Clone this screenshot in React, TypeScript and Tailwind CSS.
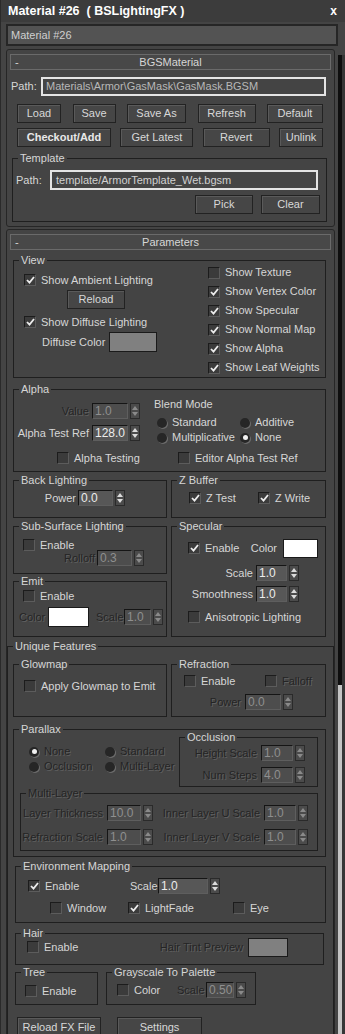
import React from 'react';

const dim = "text-[#242424] [text-shadow:1px_1px_0_#606060]";

function Box({ on }: { on?: boolean }) {
  return (
    <span className="flex h-[12px] w-[12px] shrink-0 items-center justify-center border border-[#1c1c1c] border-b-[#5c5c5c] border-r-[#5c5c5c] bg-[#3b3b3b]">
      {on && (
        <svg width="9" height="8" viewBox="0 0 9 8">
          <path d="M1 4l2.5 2.6L8 1" stroke="#ececec" strokeWidth="1.8" fill="none" />
        </svg>
      )}
    </span>
  );
}

function Check({ label, on, off, className = "" }: { label: string; on?: boolean; off?: boolean; className?: string }) {
  return (
    <div className={`flex h-[14px] shrink-0 items-center gap-[5px] ${className}`}>
      <Box on={on} />
      <span className={`whitespace-nowrap ${off ? dim : ""}`}>{label}</span>
    </div>
  );
}

function Radio({ label, on, off, className = "" }: { label: string; on?: boolean; off?: boolean; className?: string }) {
  return (
    <div className={`flex h-[15px] items-center gap-[5px] ${className}`}>
      <span className="flex h-[10px] w-[10px] shrink-0 items-center justify-center rounded-full bg-[#262626] shadow-[1px_1px_0_#6c6c6c]">
        {on && <span className="h-[5px] w-[5px] rounded-full bg-[#f0f0f0]" />}
      </span>
      <span className={`whitespace-nowrap ${off ? dim : ""}`}>{label}</span>
    </div>
  );
}

function Spin({ v, w, off }: { v: string; w: string; off?: boolean }) {
  const tri = off ? "#8a8a8a" : "#dcdcdc";
  return (
    <div className="flex items-center gap-[2px]">
      <span
        className={`flex h-[16px] items-center overflow-hidden whitespace-nowrap border border-[#151515] border-b-[#5e5e5e] border-r-[#5e5e5e] pl-[2px] text-[12px] ${w} ${
          off ? "bg-[#4d4d4d] text-[#8f8f8f]" : "bg-[#575757] text-[#ececec]"
        }`}
      >
        {v}
      </span>
      <span className="flex h-[16px] w-[10px] flex-col items-center justify-center gap-[2px] border border-[#2a2a2a] bg-[#4b4b4b]">
        <svg width="6" height="4" viewBox="0 0 6 4">
          <path d="M0 4L3 0L6 4Z" fill={tri} />
        </svg>
        <svg width="6" height="4" viewBox="0 0 6 4">
          <path d="M0 0L6 0L3 4Z" fill={tri} />
        </svg>
      </span>
    </div>
  );
}

function Btn({ children, className = "" }: { children: React.ReactNode; className?: string }) {
  return (
    <div
      className={`flex h-[19px] shrink-0 items-center justify-center border border-[#222] bg-[#464646] text-[#d8d8d8] shadow-[inset_1px_1px_0_#5a5a5a] ${className}`}
    >
      {children}
    </div>
  );
}

function Group({ title, off, className = "", children }: { title: string; off?: boolean; className?: string; children?: React.ReactNode }) {
  return (
    <fieldset className={`shrink-0 border border-[#1f1f1f] ${className}`}>
      <legend className={`ml-[5px] px-[2px] leading-[13px] ${off ? dim : ""}`}>{title}</legend>
      {children}
    </fieldset>
  );
}

function Header({ title }: { title: string }) {
  return (
    <div className="mx-[3px] flex h-[16px] items-center border border-[#6a6a6a] bg-[#484848] px-[4px]">
      <span className="w-[20px]">-</span>
      <span className="flex-1 text-center">{title}</span>
      <span className="w-[20px]" />
    </div>
  );
}

function Swatch({ className = "" }: { className?: string }) {
  return <span className={`shrink-0 border border-[#1a1a1a] ${className}`} />;
}

export default function App() {
  return (
    <div className="flex h-[1034px] w-[345px] flex-col overflow-hidden border-l border-[#2a2a2a] bg-[#444] font-['Liberation_Sans',Arial,sans-serif] text-[11px] leading-[13px] text-[#d6d6d6]">
      {/* title bar */}
      <div className="flex h-[22px] shrink-0 items-center justify-between bg-[#3c3c3c] pl-[7px] pr-[8px]">
        <span className="whitespace-pre text-[12.5px] font-bold text-white">Material #26  ( BSLightingFX )</span>
        <span className="text-[12px] font-bold text-white">x</span>
      </div>

      {/* name field */}
      <div className="ml-[5px] mt-[2px] flex h-[22px] w-[332px] shrink-0 items-center border-2 border-[#262626] bg-[#535353] pl-[3px] text-[#cfcfcf]">
        Material #26
      </div>

      <div className="flex min-h-0 flex-1">
        <div className="w-[336px] shrink-0">
          {/* BGSMaterial rollout */}
          <div className="ml-[5px] mt-[3px] w-[329px] rounded-[3px] border border-[#262626] pb-[4px] pt-[4px]">
            <Header title="BGSMaterial" />
            <div className="mt-[7px] flex h-[19px] items-center pl-[4px]">
              <span className="w-[30px]">Path:</span>
              <span className="flex h-[19px] w-[285px] items-center border-2 border-[#e4e4e4] pl-[3px] text-[#b8b8b8]">
                Materials\Armor\GasMask\GasMask.BGSM
              </span>
            </div>
            <div className="mt-[8px] flex justify-between pl-[10px] pr-[11px]">
              <Btn className="w-[44px]">Load</Btn>
              <Btn className="w-[43px]">Save</Btn>
              <Btn className="w-[59px]">Save As</Btn>
              <Btn className="w-[58px]">Refresh</Btn>
              <Btn className="w-[56px]">Default</Btn>
            </div>
            <div className="mt-[5px] flex justify-between pl-[10px] pr-[11px]">
              <Btn className="w-[94px] font-bold text-[#e8e8e8]">Checkout/Add</Btn>
              <Btn className="w-[73px]">Get Latest</Btn>
              <Btn className="w-[67px]">Revert</Btn>
              <Btn className="w-[44px]">Unlink</Btn>
            </div>
            <Group title="Template" className="ml-[5px] mt-[5px] h-[70px] w-[315px]">
              <div className="mt-[5px] flex items-center pl-[3px]">
                <span className="w-[34px]">Path:</span>
                <span className="flex h-[20px] w-[268px] items-center border-2 border-[#e4e4e4] pl-[4px] text-[#d0d0d0]">
                  template/ArmorTemplate_Wet.bgsm
                </span>
              </div>
              <div className="mt-[5px] flex justify-end gap-[8px] pr-[6px]">
                <Btn className="w-[58px]">Pick</Btn>
                <Btn className="w-[59px]">Clear</Btn>
              </div>
            </Group>
          </div>

          {/* Parameters rollout */}
          <div className="ml-[5px] mt-[2px] w-[329px] rounded-[3px] border border-[#262626] pt-[4px]">
            <Header title="Parameters" />
            <div className="pl-[6px] pr-[8px]">
              {/* View */}
              <Group title="View" className="mt-[4px] h-[124px] w-[313px]">
                <div className="flex">
                  <div className="flex w-[194px] flex-col pl-[10px]">
                    <Check label="Show Ambient Lighting" on className="mt-[6px]" />
                    <Btn className="ml-[43px] mt-[3px] h-[18px] w-[58px]">Reload</Btn>
                    <Check label="Show Diffuse Lighting" on className="mt-[6px]" />
                    <div className="mt-[3px] flex items-center pl-[18px]">
                      <span className="w-[67px] whitespace-nowrap">Diffuse Color</span>
                      <Swatch className="h-[20px] w-[48px] bg-[#808080]" />
                    </div>
                  </div>
                  <div className="-mt-[4px] flex flex-col">
                    <Check label="Show Texture" className="h-[19px]" />
                    <Check label="Show Vertex Color" on className="h-[19px]" />
                    <Check label="Show Specular" on className="h-[19px]" />
                    <Check label="Show Normal Map" on className="h-[19px]" />
                    <Check label="Show Alpha" on className="h-[19px]" />
                    <Check label="Show Leaf Weights" on className="h-[19px]" />
                  </div>
                </div>
              </Group>

              {/* Alpha */}
              <Group title="Alpha" className="mt-[5px] h-[89px] w-[313px]">
                <div className="flex">
                  <div className="w-[127px]">
                    <div className="mt-[7px] flex items-center">
                      <span className={`w-[75px] text-right ${dim}`}>Value</span>
                      <span className="ml-[3px]">
                        <Spin v="1.0" w="w-[36px]" off />
                      </span>
                    </div>
                    <div className="mt-[6px] flex items-center">
                      <span className="w-[75px] whitespace-nowrap text-right">Alpha Test Ref</span>
                      <span className="ml-[3px]">
                        <Spin v="128.0" w="w-[36px]" />
                      </span>
                    </div>
                  </div>
                  <div className="ml-[13px] mt-[2px]">
                    <div className="h-[14px]">Blend Mode</div>
                    <div className="mt-[3px] grid grid-cols-[83px_auto] pl-[3px]">
                      <Radio label="Standard" />
                      <Radio label="Additive" />
                      <Radio label="Multiplicative" />
                      <Radio label="None" on />
                    </div>
                  </div>
                </div>
                <div className="mt-[6px] flex pl-[43px]">
                  <Check label="Alpha Testing" className="w-[121px]" />
                  <Check label="Editor Alpha Test Ref" />
                </div>
              </Group>

              {/* Back lighting / Z buffer */}
              <div className="mt-[2px] flex gap-[4px]">
                <Group title="Back Lighting" className="h-[44px] w-[154px]">
                  <div className="mt-[3px] flex items-center">
                    <span className="w-[62px] text-right">Power</span>
                    <span className="ml-[2px]">
                      <Spin v="0.0" w="w-[35px]" />
                    </span>
                  </div>
                </Group>
                <Group title="Z Buffer" className="h-[44px] w-[155px]">
                  <div className="mt-[4px] flex pl-[17px]">
                    <Check label="Z Test" on className="w-[69px]" />
                    <Check label="Z Write" on />
                  </div>
                </Group>
              </div>

              {/* Sub-surface / Emit / Specular */}
              <div className="mt-[2px] flex gap-[4px]">
                <div className="flex w-[154px] flex-col">
                  <Group title="Sub-Surface Lighting" className="h-[54px] w-[154px]">
                    <Check label="Enable" className="mt-[5px] pl-[9px]" />
                    <div className="-mt-[2px] flex items-center">
                      <span className={`w-[81px] text-right ${dim}`}>Rolloff</span>
                      <span className="ml-[2px]">
                        <Spin v="0.3" w="w-[35px]" off />
                      </span>
                    </div>
                  </Group>
                  <Group title="Emit" className="mt-[1px] h-[62px] w-[154px]">
                    <Check label="Enable" className="mt-[1px] pl-[9px]" />
                    <div className="mt-[4px] flex items-center pl-[5px]">
                      <span className={`w-[26px] ${dim}`}>Color</span>
                      <Swatch className="ml-[3px] h-[20px] w-[41px] bg-white" />
                      <span className={`ml-[7px] w-[25px] ${dim}`}>Scale</span>
                      <span className="ml-[3px]">
                        <Spin v="1.0" w="w-[27px]" off />
                      </span>
                    </div>
                  </Group>
                </div>
                <Group title="Specular" className="h-[117px] w-[155px]">
                  <div className="mt-[5px] flex h-[20px] items-center pl-[16px] pr-[7px]">
                    <Check label="Enable" on />
                    <span className="ml-auto">Color</span>
                    <Swatch className="ml-[6px] h-[19px] w-[35px] bg-white" />
                  </div>
                  <div className="mt-[7px] flex items-center">
                    <span className="w-[81px] text-right">Scale</span>
                    <span className="ml-[3px]">
                      <Spin v="1.0" w="w-[31px]" />
                    </span>
                  </div>
                  <div className="mt-[5px] flex items-center">
                    <span className="w-[81px] text-right">Smoothness</span>
                    <span className="ml-[3px]">
                      <Spin v="1.0" w="w-[31px]" />
                    </span>
                  </div>
                  <Check label="Anisotropic Lighting" className="mt-[8px] pl-[16px]" />
                </Group>
              </div>

              {/* Unique features */}
              <Group title="Unique Features" className="-ml-[6px] -mr-[8px] mt-[3px] h-[420px]">
                <div className="pl-[5px] pr-[7px]">
                  <div className="mt-[5px] flex gap-[4px]">
                    <Group title="Glowmap" className="h-[59px] w-[154px]">
                      <Check label="Apply Glowmap to Emit" className="mt-[8px] pl-[10px]" />
                    </Group>
                    <Group title="Refraction" className="h-[59px] w-[155px]">
                      <div className="mt-[3px] flex pl-[12px]">
                        <Check label="Enable" className="w-[81px]" />
                        <Check label="Falloff" off />
                      </div>
                      <div className="mt-[6px] flex items-center">
                        <span className={`w-[69px] text-right ${dim}`}>Power</span>
                        <span className="ml-[4px]">
                          <Spin v="0.0" w="w-[36px]" off />
                        </span>
                      </div>
                    </Group>
                  </div>

                  <Group title="Parallax" className="mt-[6px] h-[134px] w-[313px]">
                    <div className="flex items-start">
                      <div className="mt-[8px] grid grid-cols-[76px_auto] pl-[15px]">
                        <Radio label="None" on off />
                        <Radio label="Standard" off />
                        <Radio label="Occlusion" off />
                        <Radio label="Multi-Layer" off />
                      </div>
                      <Group title="Occlusion" className="-mt-[5px] ml-auto mr-[7px] h-[56px] w-[139px]">
                        <div className="mt-[1px] flex items-center">
                          <span className={`w-[77px] text-right ${dim}`}>Height Scale</span>
                          <span className="ml-[4px]">
                            <Spin v="1.0" w="w-[32px]" off />
                          </span>
                        </div>
                        <div className="mt-[6px] flex items-center">
                          <span className={`w-[77px] text-right ${dim}`}>Num Steps</span>
                          <span className="ml-[4px]">
                            <Spin v="4.0" w="w-[32px]" off />
                          </span>
                        </div>
                      </Group>
                    </div>
                    <Group title="Multi-Layer" off className="ml-[6px] h-[64px] w-[298px]">
                      <div className="mt-[5px] flex items-center">
                        <span className={`w-[82px] whitespace-nowrap text-right ${dim}`}>Layer Thickness</span>
                        <span className="ml-[4px]">
                          <Spin v="10.0" w="w-[34px]" off />
                        </span>
                        <span className={`w-[107px] whitespace-nowrap text-right ${dim}`}>Inner Layer U Scale</span>
                        <span className="ml-[4px]">
                          <Spin v="1.0" w="w-[32px]" off />
                        </span>
                      </div>
                      <div className="mt-[8px] flex items-center">
                        <span className={`w-[82px] whitespace-nowrap text-right ${dim}`}>Refraction Scale</span>
                        <span className="ml-[4px]">
                          <Spin v="1.0" w="w-[34px]" off />
                        </span>
                        <span className={`w-[107px] whitespace-nowrap text-right ${dim}`}>Inner Layer V Scale</span>
                        <span className="ml-[4px]">
                          <Spin v="1.0" w="w-[32px]" off />
                        </span>
                      </div>
                    </Group>
                  </Group>

                  <Group title="Environment Mapping" className="ml-[2px] mt-[3px] h-[63px] w-[311px]">
                    <div className="mt-[4px] flex h-[18px] items-center pl-[12px]">
                      <Check label="Enable" on className="w-[102px]" />
                      <span className="w-[28px]">Scale</span>
                      <Spin v="1.0" w="w-[50px]" />
                    </div>
                    <div className="mt-[6px] flex pl-[34px]">
                      <Check label="Window" className="w-[78px]" />
                      <Check label="LightFade" on className="w-[105px]" />
                      <Check label="Eye" />
                    </div>
                  </Group>

                  <Group title="Hair" className="ml-[2px] mt-[4px] h-[38px] w-[309px]">
                    <div className="-mt-[3px] flex h-[20px] items-center pl-[11px] pr-[35px]">
                      <Check label="Enable" />
                      <span className={`ml-auto ${dim}`}>Hair Tint Preview</span>
                      <Swatch className="ml-[5px] h-[19px] w-[40px] bg-[#808080]" />
                    </div>
                  </Group>

                  <div className="ml-[2px] mt-[1px] flex gap-[8px]">
                    <Group title="Tree" className="h-[39px] w-[83px]">
                      <Check label="Enable" className="mt-[5px] pl-[9px]" />
                    </Group>
                    <Group title="Grayscale To Palette" className="h-[39px] w-[150px]">
                      <div className="mt-[3px] flex h-[16px] items-center pl-[10px]">
                        <Check label="Color" className="w-[60px]" />
                        <span className={`w-[29px] ${dim}`}>Scale</span>
                        <Spin v="0.50" w="w-[28px]" off />
                      </div>
                    </Group>
                  </div>

                  <div className="mt-[12px] flex gap-[16px] pl-[4px]">
                    <Btn className="h-[20px] w-[84px]">Reload FX File</Btn>
                    <Btn className="h-[20px] w-[85px]">Settings</Btn>
                  </div>
                </div>
              </Group>
            </div>
          </div>
        </div>

        {/* scrollbar */}
        <div className="flex w-[8px] shrink-0 pt-[9px]">
          <div className="ml-[1px] flex w-[4px] flex-col">
            <div className="h-[630px] bg-[#0e0e0e]" />
            <div className="flex-1 bg-[#c4c4c4]" />
          </div>
          <div className="w-[3px] bg-[#363636]" />
        </div>
      </div>
    </div>
  );
}
